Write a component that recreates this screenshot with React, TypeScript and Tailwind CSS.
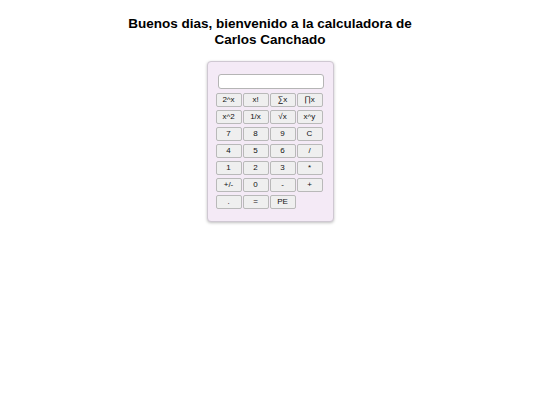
import React, { useState } from 'react';

const rows: string[][] = [
  ['2^x', 'x!', '∑x', '∏x'],
  ['x^2', '1/x', '√x', 'x^y'],
  ['7', '8', '9', 'C'],
  ['4', '5', '6', '/'],
  ['1', '2', '3', '*'],
  ['+/-', '0', '-', '+'],
  ['.', '=', 'PE'],
];

const App: React.FC = () => {
  const [display, setDisplay] = useState('');

  return (
    <div className="min-h-screen bg-white flex flex-col items-center font-['Liberation_Sans',Arial,sans-serif]">
      <h1 className="mt-[16px] text-[13.5px] leading-[16px] font-bold text-black text-center">
        Buenos dias, bienvenido a la calculadora de
        <br />
        Carlos Canchado
      </h1>
      <div className="mt-[13px] w-[127px] bg-[#f4eaf6] border border-[#cfc8d2] rounded-[4px] shadow-[0_1px_3px_rgba(0,0,0,0.25)] pt-[12px] pb-[12px] px-[8px]">
        <input
          type="text"
          value={display}
          onChange={(e) => setDisplay(e.target.value)}
          className="block ml-[2px] w-[106px] h-[15px] bg-white border border-[#b5b5b5] rounded-[3px] outline-none text-[8px] px-1"
        />
        <div className="mt-[4px] grid grid-cols-[repeat(4,26px)] gap-x-[1px] gap-y-[3px]">
          {rows.flat().map((b) => (
            <button
              key={b}
              onClick={() => setDisplay(display + b)}
              className="h-[14px] bg-[#efefef] border border-[#b9b9b9] rounded-[2px] text-[8px] leading-none text-[#111]"
            >
              {b}
            </button>
          ))}
        </div>
      </div>
    </div>
  );
};

export default App;
